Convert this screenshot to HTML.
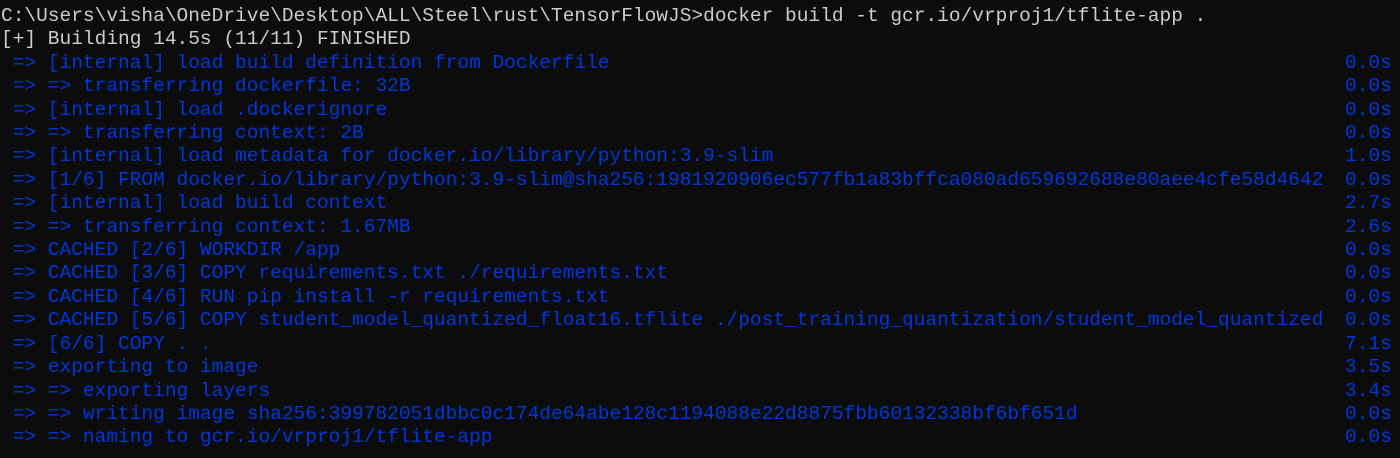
<!DOCTYPE html>
<html><head><meta charset="utf-8"><style>
html,body{margin:0;padding:0;background:#0c0c0c;width:1400px;height:458px;overflow:hidden}
pre{margin:0;position:absolute;top:5px;font-family:"Liberation Mono",monospace;font-size:19.5px;line-height:23.4px;color:#cccccc;white-space:pre}
#m{left:1px}
#t{left:1345px}
.b{color:#0037da}
</style></head><body><pre id="m">C:\Users\visha\OneDrive\Desktop\ALL\Steel\rust\TensorFlowJS>docker build -t gcr.io/vrproj1/tflite-app .
[+] Building 14.5s (11/11) FINISHED
<span class="b"> => [internal] load build definition from Dockerfile
 => => transferring dockerfile: 32B
 => [internal] load .dockerignore
 => => transferring context: 2B
 => [internal] load metadata for docker.io/library/python:3.9-slim
 => [1/6] FROM docker.io/library/python:3.9-slim@sha256:1981920906ec577fb1a83bffca080ad659692688e80aee4cfe58d4642
 => [internal] load build context
 => => transferring context: 1.67MB
 => CACHED [2/6] WORKDIR /app
 => CACHED [3/6] COPY requirements.txt ./requirements.txt
 => CACHED [4/6] RUN pip install -r requirements.txt
 => CACHED [5/6] COPY student_model_quantized_float16.tflite ./post_training_quantization/student_model_quantized
 => [6/6] COPY . .
 => exporting to image
 => => exporting layers
 => => writing image sha256:399782051dbbc0c174de64abe128c1194088e22d8875fbb60132338bf6bf651d
 => => naming to gcr.io/vrproj1/tflite-app</span></pre>
<pre id="t" class="b">


0.0s
0.0s
0.0s
0.0s
1.0s
0.0s
2.7s
2.6s
0.0s
0.0s
0.0s
0.0s
7.1s
3.5s
3.4s
0.0s
0.0s</pre></body></html>
